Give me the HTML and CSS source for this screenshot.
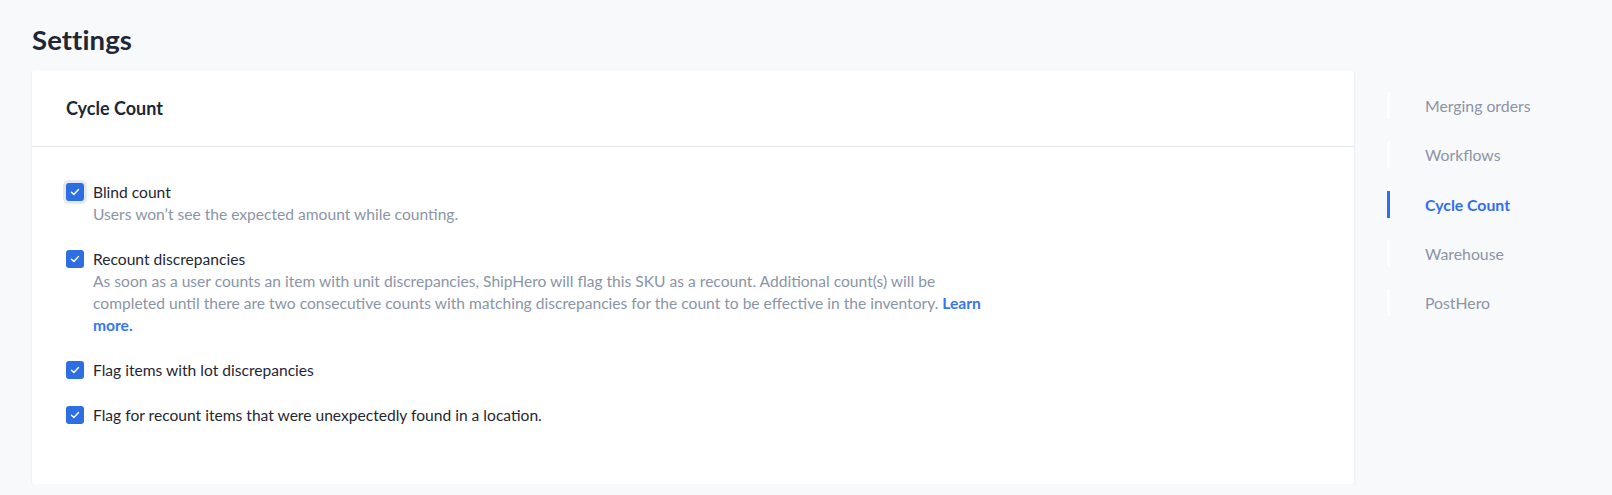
FILE: index.html
```html
<!DOCTYPE html>
<html lang="en">
<head>
<meta charset="utf-8">
<title>Settings</title>
<link rel="stylesheet" href="styles.css">
</head>
<body>
<div class="page">
  <h1 class="page-title">Settings</h1>
  <div class="layout">
    <section class="card">
      <header class="card-header">
        <h2 class="card-title">Cycle Count</h2>
      </header>
      <div class="card-body">
        <div class="option">
          <span class="checkbox focused">
            <svg viewBox="0 0 18 18" width="18" height="18"><path d="M5.5 9.2 L7.9 11.4 L12.5 6.6" fill="none" stroke="#fff" stroke-width="1.4" stroke-linecap="round" stroke-linejoin="round"/></svg>
          </span>
          <div class="option-text">
            <div class="option-label">Blind count</div>
            <div class="option-desc">Users won’t see the expected amount while counting.</div>
          </div>
        </div>
        <div class="option">
          <span class="checkbox">
            <svg viewBox="0 0 18 18" width="18" height="18"><path d="M5.5 9.2 L7.9 11.4 L12.5 6.6" fill="none" stroke="#fff" stroke-width="1.4" stroke-linecap="round" stroke-linejoin="round"/></svg>
          </span>
          <div class="option-text">
            <div class="option-label">Recount discrepancies</div>
            <div class="option-desc">As soon as a user counts an item with unit discrepancies, ShipHero will flag this SKU as a recount. Additional count(s) will be completed until there are two consecutive counts with matching discrepancies for the count to be effective in the inventory. <a class="link" href="#">Learn more.</a></div>
          </div>
        </div>
        <div class="option">
          <span class="checkbox">
            <svg viewBox="0 0 18 18" width="18" height="18"><path d="M5.5 9.2 L7.9 11.4 L12.5 6.6" fill="none" stroke="#fff" stroke-width="1.4" stroke-linecap="round" stroke-linejoin="round"/></svg>
          </span>
          <div class="option-text">
            <div class="option-label">Flag items with lot discrepancies</div>
          </div>
        </div>
        <div class="option">
          <span class="checkbox">
            <svg viewBox="0 0 18 18" width="18" height="18"><path d="M5.5 9.2 L7.9 11.4 L12.5 6.6" fill="none" stroke="#fff" stroke-width="1.4" stroke-linecap="round" stroke-linejoin="round"/></svg>
          </span>
          <div class="option-text">
            <div class="option-label">Flag for recount items that were unexpectedly found in a location.</div>
          </div>
        </div>
      </div>
    </section>
    <nav class="side-nav">
      <a class="nav-item" href="#">Merging orders</a>
      <a class="nav-item" href="#">Workflows</a>
      <a class="nav-item active" href="#">Cycle Count</a>
      <a class="nav-item" href="#">Warehouse</a>
      <a class="nav-item" href="#">PostHero</a>
    </nav>
  </div>
</div>
</body>
</html>
```
FILE: styles.css
```css
* { box-sizing: border-box; }
html, body {
  margin: 0;
  padding: 0;
  background: #f8f9fb;
  font-family: Lato, "Open Sans", "Liberation Sans", sans-serif;
  color: #1f2937;
}
.page {
  padding: 24px 0 0 32px;
}
.page-title {
  margin: 0;
  font-size: 27.5px;
  line-height: 32px;
  font-weight: 700;
  color: #1e2734;
  letter-spacing: 0.1px;
}
.layout {
  display: flex;
  align-items: flex-start;
  gap: 33px;
  margin-top: 14px;
}
.card {
  width: 1322px;
  flex: none;
  background: #fff;
  border-radius: 2px;
  box-shadow: 0 1px 3px rgba(20, 30, 50, 0.08), 0 0 1px rgba(20, 30, 50, 0.06);
}
.card-header {
  height: 77px;
  display: flex;
  align-items: center;
  padding: 0 34px;
  border-bottom: 1px solid #e6eaf0;
}
.card-title {
  margin: 0;
  font-size: 18px;
  font-weight: 700;
  color: #1e2734;
}
.card-body {
  padding: 34px 34px 58px;
  display: flex;
  flex-direction: column;
  gap: 23px;
}
.option {
  display: flex;
  align-items: flex-start;
  gap: 9px;
}
.checkbox {
  flex: none;
  width: 18px;
  height: 18px;
  margin-top: 2px;
  border-radius: 3px;
  background: #2d6ee3;
  display: flex;
  align-items: center;
  justify-content: center;
}
.checkbox svg { display: block; }
.checkbox.focused {
  box-shadow: 0 0 0 3px #e5eaf2;
}
.option-text {
  max-width: 905px;
  font-size: 15.6px;
  line-height: 22px;
}
.option-label {
  color: #1f2733;
}
.option-desc {
  color: #8a95a7;
}
.link {
  color: #3577f0;
  font-weight: 700;
  text-decoration: none;
}
.side-nav {
  display: flex;
  flex-direction: column;
  gap: 22.3px;
  padding-top: 22px;
}
.nav-item {
  display: block;
  height: 27px;
  line-height: 27px;
  padding-left: 35px;
  border-left: 3px solid #ffffff;
  font-size: 15.8px;
  color: #8a94a6;
  text-decoration: none;
  white-space: nowrap;
}
.nav-item.active {
  border-left-color: #2f6ff0;
  color: #2f6ff0;
  font-weight: 700;
}
```
